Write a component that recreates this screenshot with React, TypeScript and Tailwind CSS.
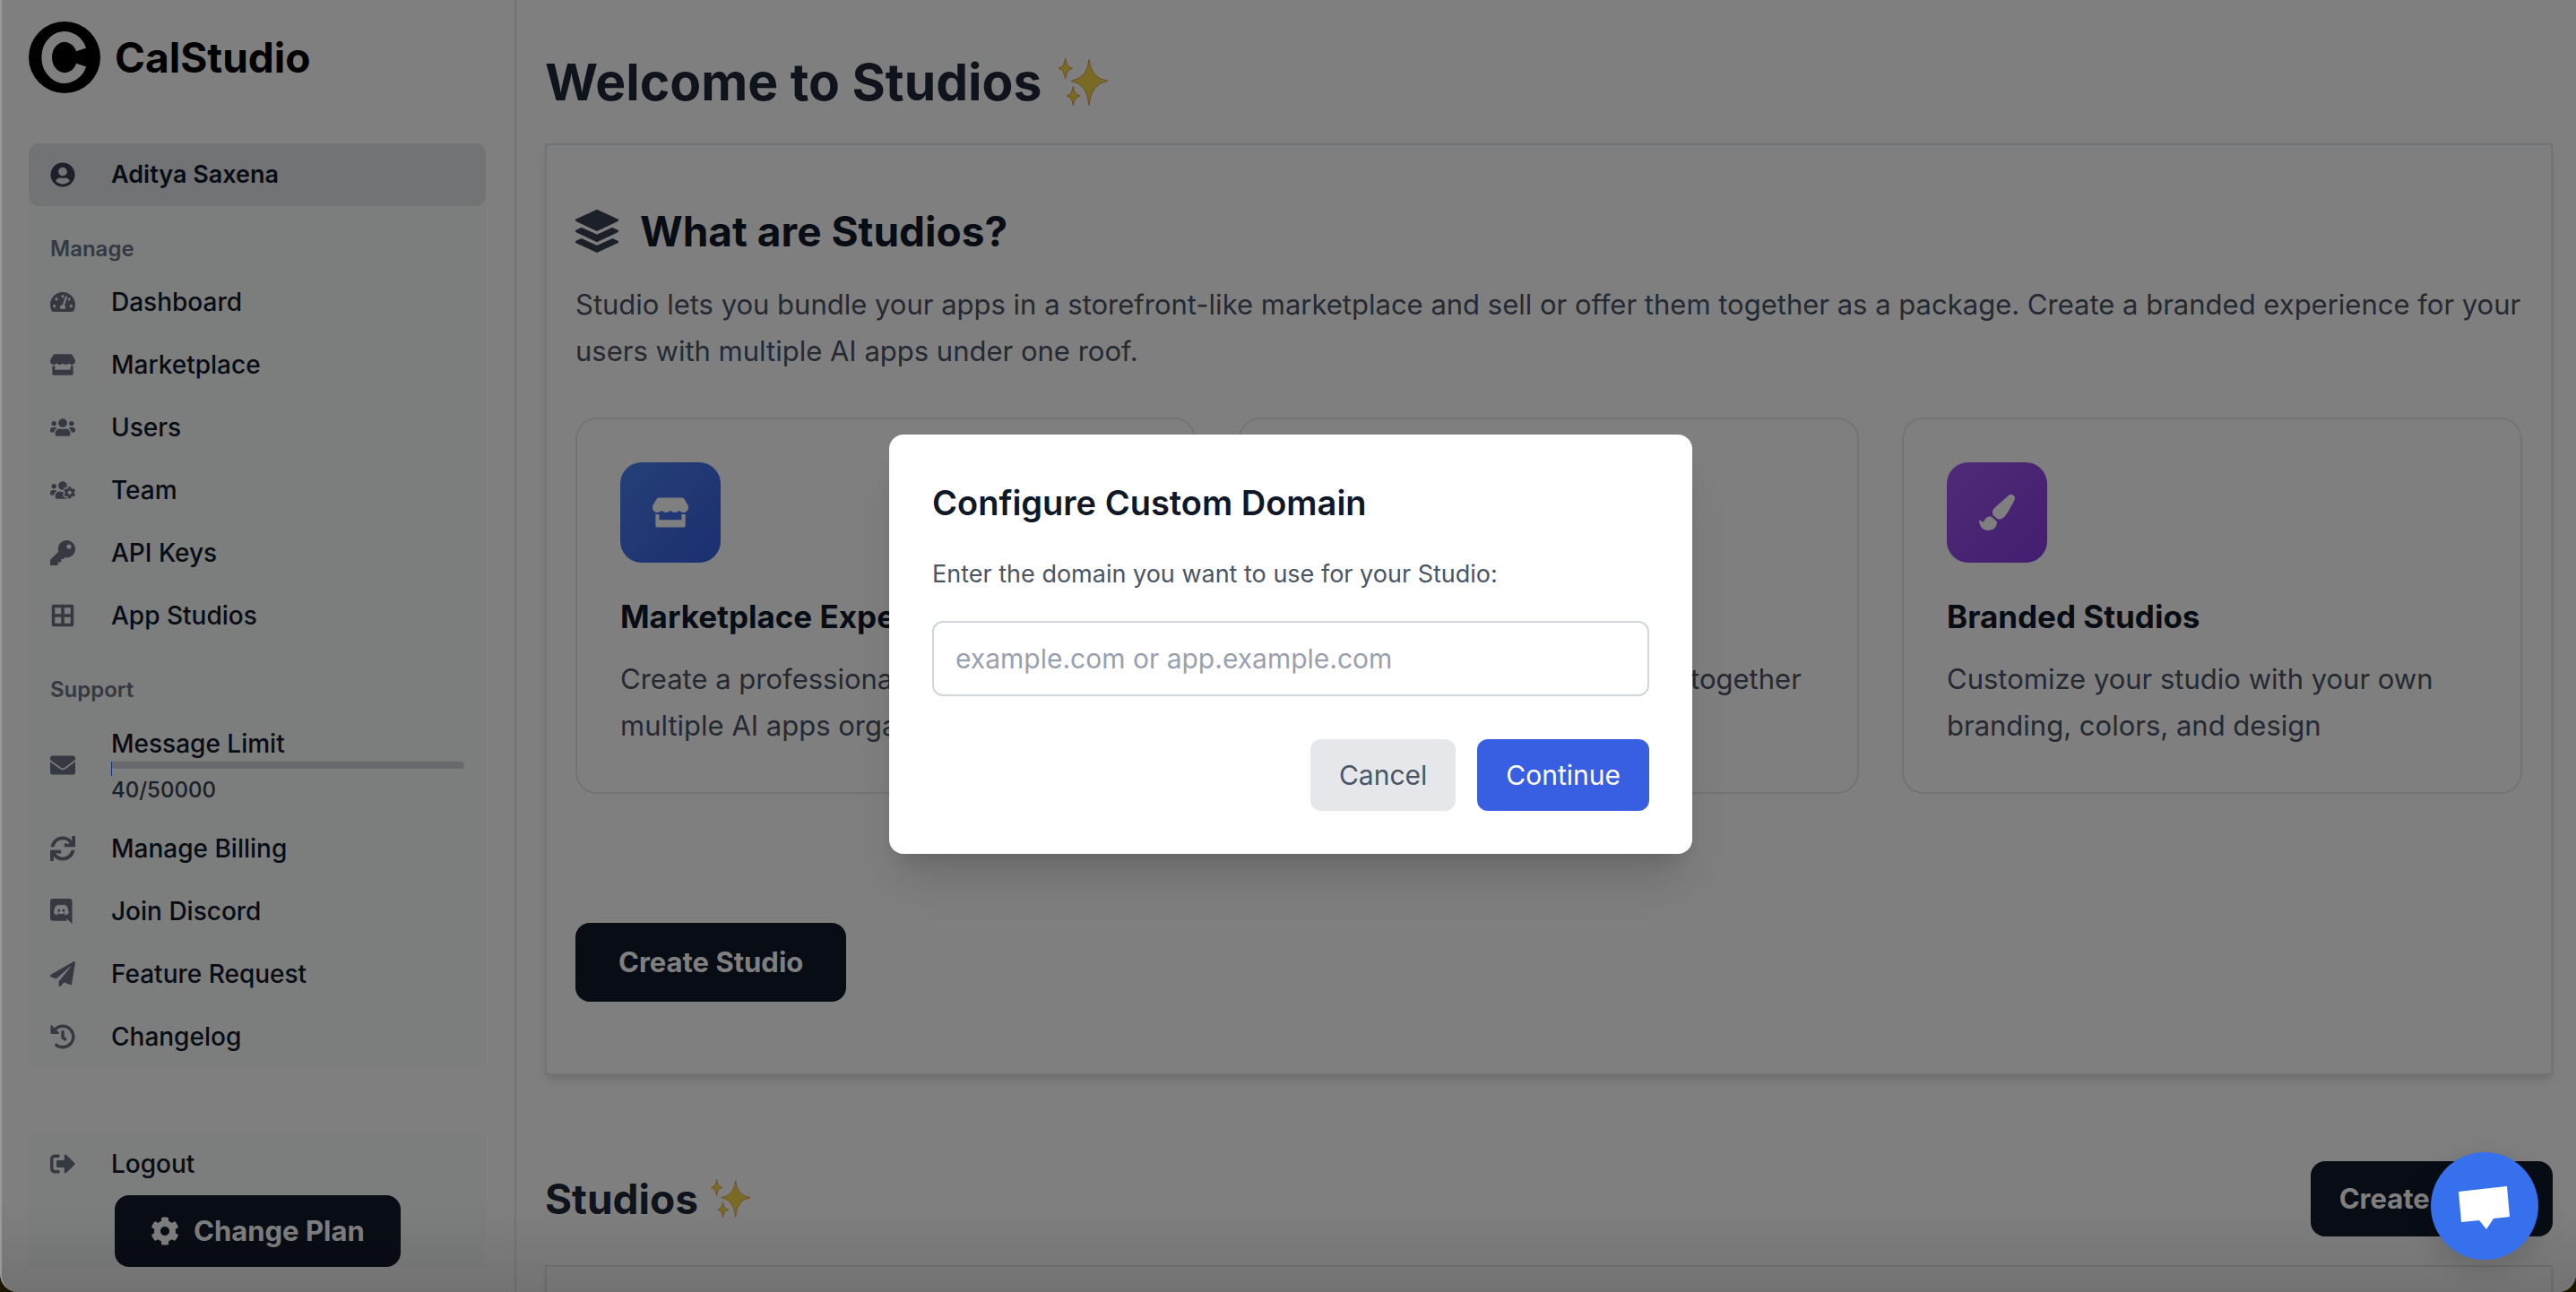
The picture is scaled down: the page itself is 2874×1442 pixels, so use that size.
import type { ReactNode } from "react";
import type { IconType } from "react-icons";
import {
  FaBorderAll,
  FaCog,
  FaCubes,
  FaEnvelope,
  FaHistory,
  FaKey,
  FaPaintBrush,
  FaPaperPlane,
  FaSignOutAlt,
  FaStore,
  FaSync,
  FaTachometerAlt,
  FaUserCircle,
  FaUsers,
  FaUsersCog,
} from "react-icons/fa";

function DiscordIcon({ className }: { className?: string }) {
  return (
    <svg viewBox="0 0 448 512" fill="currentColor" className={className} aria-hidden="true">
      <path d="M297.216 243.2c0 15.616-11.52 28.416-26.112 28.416-14.336 0-26.112-12.8-26.112-28.416s11.52-28.416 26.112-28.416c14.592 0 26.112 12.8 26.112 28.416zm-119.552-28.416c-14.592 0-26.112 12.8-26.112 28.416s11.776 28.416 26.112 28.416c14.592 0 26.112-12.8 26.112-28.416.256-15.616-11.52-28.416-26.112-28.416zM448 52.736V512c-64.494-56.994-43.868-38.128-118.784-107.776l13.568 47.36H52.48C23.552 451.584 0 428.032 0 398.848V52.736C0 23.552 23.552 0 52.48 0h343.04C424.448 0 448 23.552 448 52.736zm-72.96 242.688c0-82.432-36.864-149.248-36.864-149.248-36.864-27.648-71.936-26.88-71.936-26.88l-3.584 4.096c43.52 13.312 63.744 32.512 63.744 32.512-60.811-33.329-132.244-33.335-191.232-7.424-9.472 4.352-15.104 7.424-15.104 7.424s21.248-20.224 67.328-33.536l-2.56-3.072s-35.072-.768-71.936 26.88c0 0-36.864 66.816-36.864 149.248 0 0 21.504 37.12 78.08 38.912 0 0 9.472-11.52 17.152-21.248-32.512-9.728-44.8-30.208-44.8-30.208 3.766 2.636 9.976 6.053 10.496 6.4 43.21 24.198 104.588 32.126 159.744 8.96 8.96-3.328 18.944-8.192 29.44-15.104 0 0-12.8 20.992-46.336 30.464 7.68 9.728 16.896 20.736 16.896 20.736 56.576-1.792 78.336-38.912 78.336-38.912z" />
    </svg>
  );
}

function LayersIcon() {
  return (
    <svg
      viewBox="0 0 144 144"
      fill="currentColor"
      stroke="currentColor"
      strokeWidth="8"
      strokeLinejoin="round"
      className="size-12 text-gray-700"
      aria-hidden="true"
    >
      <path d="M72 4 140 35.5 72 68 4 35.5Z" />
      <path d="M20 64 72 88 124 64 140 72 72 104.500 4 72Z" />
      <path d="M20 100.500 72 124.500 124 100.500 140 108 72 140 4 108Z" />
    </svg>
  );
}

function Logo() {
  return (
    <svg viewBox="0 0 240 240" className="size-20" aria-hidden="true">
      <circle cx="120" cy="120" r="120" />
      <path d="M176 94A60 69 0 1 0 176 146" fill="none" stroke="#fff" strokeWidth="35" />
    </svg>
  );
}

function Sparkles({ className }: { className: string }) {
  return (
    <svg
      viewBox="24 36 180 180"
      fill="#f2d648"
      stroke="#dc9440"
      strokeWidth="3"
      strokeLinejoin="round"
      className={className}
      role="img"
      aria-label="sparkles"
    >
      <path d="M135 50Q141 112 197 121Q141 130 135 202Q129 130 76 121Q129 112 135 50Z" />
      <path d="M56 44Q59 75 79 79Q59 84 56 114Q53 84 33 79Q53 75 56 44Z" />
      <path d="M82 139Q85 167 105 171Q85 176 82 204Q79 176 61 171Q79 167 82 139Z" />
    </svg>
  );
}

type NavItem = { label: string; icon: IconType | typeof DiscordIcon };

const manageLinks: NavItem[] = [
  { label: "Dashboard", icon: FaTachometerAlt },
  { label: "Marketplace", icon: FaStore },
  { label: "Users", icon: FaUsers },
  { label: "Team", icon: FaUsersCog },
  { label: "API Keys", icon: FaKey },
  { label: "App Studios", icon: FaBorderAll },
];

const supportLinks: NavItem[] = [
  { label: "Manage Billing", icon: FaSync },
  { label: "Join Discord", icon: DiscordIcon },
  { label: "Feature Request", icon: FaPaperPlane },
  { label: "Changelog", icon: FaHistory },
];

const features = [
  {
    title: "Marketplace Experience",
    text: "Create a professional storefront with multiple AI apps organized by category",
    icon: FaStore,
    color: "from-[#4a80ee] to-[#385fe2]",
  },
  {
    title: "Bundle & Sell",
    text: "Bundle and offer more AI apps together as one package",
    icon: FaCubes,
    color: "from-green-500 to-green-600",
  },
  {
    title: "Branded Studios",
    text: "Customize your studio with your own branding, colors, and design",
    icon: FaPaintBrush,
    color: "from-[#a056f0] to-[#873adf]",
  },
];

function NavLink({ label, icon: Icon }: NavItem) {
  return (
    <li>
      <a href="#" className="flex h-[70px] items-center gap-6 px-6 text-[28px] font-medium text-gray-900">
        <span className="w-11 text-gray-500">
          <Icon className="h-7 w-auto" />
        </span>
        {label}
      </a>
    </li>
  );
}

function NavHeading({ children }: { children: ReactNode }) {
  return <h3 className="px-6 pt-8 pb-2 text-[24px] leading-8 font-semibold text-gray-500">{children}</h3>;
}

function Sidebar() {
  return (
    <aside className="w-[574px] shrink-0 border-r-2 border-gray-200 bg-white pt-6 pr-8 pl-[30px]">
      <a href="#" className="flex items-center gap-4 text-[46px] font-bold text-black">
        <Logo />
        CalStudio
      </a>

      <nav className="mt-14 bg-gray-50">
        <a
          href="#"
          className="flex h-[70px] items-center gap-6 rounded-xl bg-gray-200 px-6 text-[27px] font-semibold text-gray-900"
        >
          <span className="w-11 text-gray-700">
            <FaUserCircle className="h-7 w-auto" />
          </span>
          Aditya Saxena
        </a>

        <NavHeading>Manage</NavHeading>
        <ul>
          {manageLinks.map((item) => (
            <NavLink key={item.label} {...item} />
          ))}
        </ul>

        <NavHeading>Support</NavHeading>
        <div className="flex items-center gap-6 px-6 pt-4 pb-[14px]">
          <span className="w-11 text-gray-500">
            <FaEnvelope className="h-7 w-auto" />
          </span>
          <div className="flex-1 font-medium">
            <p className="text-[28px] leading-10 text-gray-900">Message Limit</p>
            <div className="h-2 rounded-full bg-gray-300">
              <div className="h-4 w-px bg-blue-600" />
            </div>
            <p className="mt-2 text-[24px] leading-8 text-gray-700">40/50000</p>
          </div>
        </div>
        <ul>
          {supportLinks.map((item) => (
            <NavLink key={item.label} {...item} />
          ))}
        </ul>
      </nav>

      <div className="mt-[72px] bg-gray-50">
        <ul>
          <NavLink label="Logout" icon={FaSignOutAlt} />
        </ul>
        <button className="ml-24 flex h-20 items-center gap-4 rounded-2xl bg-gray-900 px-10 text-[31px] font-bold text-white">
          <FaCog className="size-8" />
          Change Plan
        </button>
      </div>
    </aside>
  );
}

function Main() {
  return (
    <main className="flex-1 bg-white pt-14 pr-[26px] pl-8">
      <h1 className="mb-8 flex items-center gap-4 text-[57px] leading-[72px] font-bold text-gray-800">
        Welcome to Studios
        <Sparkles className="size-[60px]" />
      </h1>

      <section className="border-2 border-gray-200 px-8 pt-16 pb-20 shadow-[0_8px_12px_-2px_rgba(0,0,0,0.1),0_4px_8px_-4px_rgba(0,0,0,0.1)]">
        <h2 className="mb-6 flex items-center gap-6 text-[46px] leading-[64px] font-bold text-gray-900">
          <LayersIcon />
          What are Studios?
        </h2>
        <p className="mb-12 text-[31px] leading-[52px] text-gray-600">
          Studio lets you bundle your apps in a storefront-like marketplace and sell or offer them together as a
          package. Create a branded experience for your users with multiple AI apps under one roof.
        </p>

        <div className="grid grid-cols-3 gap-12">
          {features.map(({ title, text, icon: Icon, color }) => (
            <div key={title} className="rounded-3xl border-2 border-gray-200 p-12">
              <div className={`flex size-28 items-center justify-center rounded-3xl bg-linear-to-br text-white ${color}`}>
                <Icon className="h-10 w-auto" />
              </div>
              <h3 className="mt-8 text-[35px] leading-[56px] font-bold text-gray-900">{title}</h3>
              <p className="mt-4 text-[31px] leading-[52px] text-gray-600">{text}</p>
            </div>
          ))}
        </div>

        <button className="mt-36 h-[88px] rounded-2xl bg-gray-900 px-12 text-[31px] font-bold text-white">
          Create Studio
        </button>
      </section>

      <div className="mt-24 flex items-center justify-between">
        <h2 className="flex items-center gap-3 text-[46px] leading-[64px] font-bold text-gray-800">
          Studios
          <Sparkles className="size-12" />
        </h2>
        <button className="h-[84px] rounded-2xl bg-gray-900 px-8 text-[31px] font-bold text-white">
          Create Studio
        </button>
      </div>
      <section className="mt-8 h-96 border-2 border-gray-200 shadow-md" />
    </main>
  );
}

function DomainDialog() {
  return (
    <div className="absolute inset-0 flex items-center justify-center bg-black/50 pb-1 pl-1">
      <form
        role="dialog"
        aria-labelledby="domain-title"
        className="w-4xl rounded-2xl bg-white p-12 shadow-[0_40px_50px_-10px_rgba(0,0,0,0.12),0_16px_20px_-12px_rgba(0,0,0,0.12)]"
      >
        <h2 id="domain-title" className="text-[38px] leading-[56px] font-semibold text-gray-900">
          Configure Custom Domain
        </h2>
        <label htmlFor="domain" className="mt-8 block text-[27px] leading-10 text-gray-600">
          Enter the domain you want to use for your Studio:
        </label>
        <input
          id="domain"
          type="text"
          placeholder="example.com or app.example.com"
          className="mt-8 block h-[84px] w-full rounded-xl border-2 border-gray-300 px-6 text-[30px] text-gray-900 placeholder:text-gray-400"
        />
        <div className="mt-12 flex justify-end gap-6">
          <button type="button" className="h-20 rounded-xl bg-gray-200 px-8 text-[30px] text-gray-600">
            Cancel
          </button>
          <button type="button" className="h-20 rounded-xl bg-[#385fe2] px-8 text-[30px] text-white">
            Continue
          </button>
        </div>
      </form>
    </div>
  );
}

export default function App() {
  return (
    <div className="h-screen bg-[#1a1600] font-[Inter,sans-serif]">
      <div className="relative flex h-full overflow-hidden rounded-b-[20px] border-l-2 border-[#999]">
        <Sidebar />
        <Main />
        <DomainDialog />
        <div className="pointer-events-none absolute inset-x-0 bottom-0 h-24 bg-linear-to-t from-black/10 to-transparent" />

        <button
          aria-label="Open chat"
          className="absolute right-[42px] bottom-9 size-[120px] rounded-full bg-[#3770ec] shadow-[0_8px_32px_rgba(0,0,0,0.15)]"
        >
          <svg viewBox="0 0 120 120" fill="#fff" className="size-full">
            <path d="M31 44 85 38 88 72 70 74 62 86 54 76 34 78Z" />
          </svg>
        </button>
      </div>
    </div>
  );
}
